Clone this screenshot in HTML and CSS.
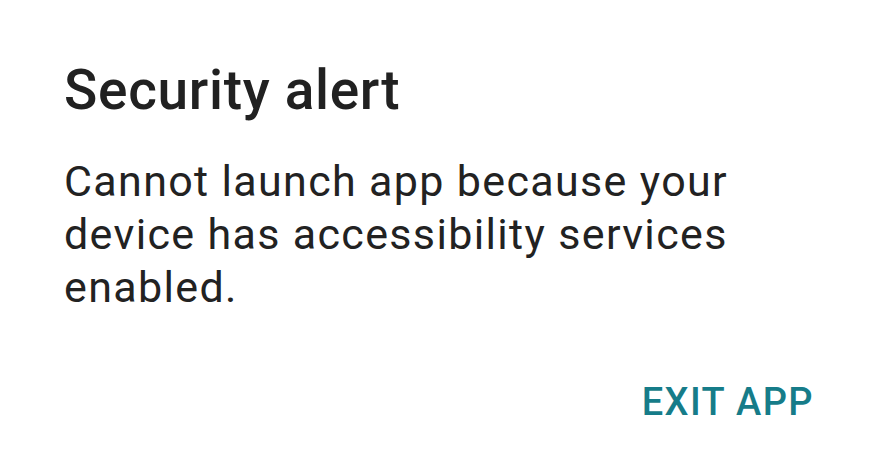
FILE: index.html
```html
<!DOCTYPE html>
<html>
<head>
<meta charset="utf-8">
<link rel="stylesheet" href="styles.css">
</head>
<body>
<div class="dialog">
  <h1 class="title">Security alert</h1>
  <p class="message">Cannot launch app because your device has accessibility services enabled.</p>
  <div class="actions">
    <span class="button">EXIT APP</span>
  </div>
</div>
</body>
</html>
```
FILE: styles.css
```css
html, body {
  margin: 0;
  padding: 0;
  background: #ffffff;
}
body {
  width: 878px;
  height: 476px;
  overflow: hidden;
  font-family: Roboto, "Noto Sans", sans-serif;
}
.dialog {
  padding: 58px 64px 0 64px;
  display: flex;
  flex-direction: column;
}
.title {
  margin: 0;
  font-size: 55px;
  font-weight: 500;
  line-height: 64px;
  letter-spacing: 0.0125em;
  color: #212121;
}
.message {
  margin: 33px 0 0;
  font-size: 43px;
  font-weight: 400;
  line-height: 53px;
  letter-spacing: 0.03125em;
  color: #222222;
  width: 700px;
}
.actions {
  display: flex;
  justify-content: flex-end;
  margin-top: 64px;
}
.button {
  font-size: 38px;
  font-weight: 500;
  line-height: 48px;
  letter-spacing: 1.4px;
  color: #167c89;
  margin-right: 0;
}
```
